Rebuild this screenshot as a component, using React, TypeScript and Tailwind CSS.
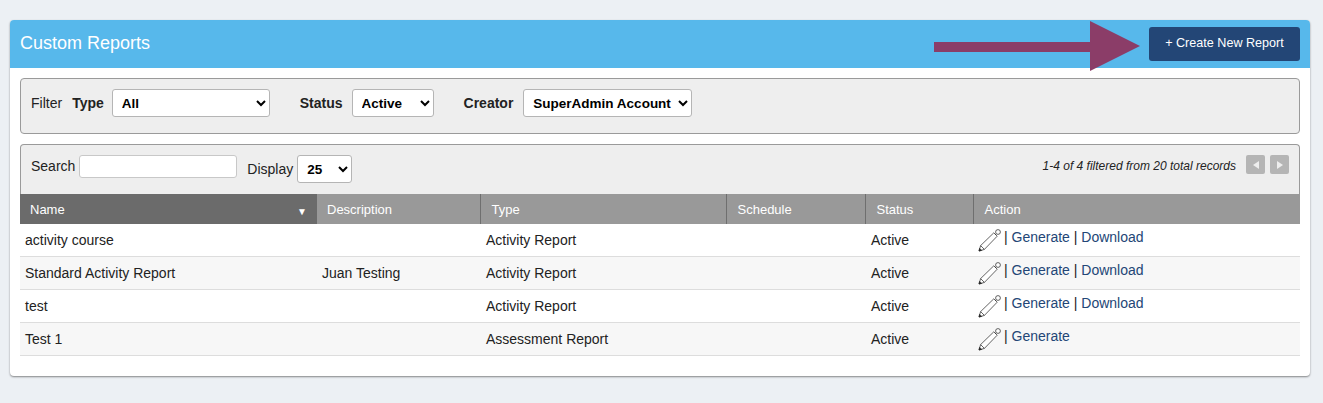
const font = { fontFamily: '"Liberation Sans", Arial, sans-serif' };

function Pencil() {
  return (
    <svg width="24" height="24" viewBox="0 0 24 24" fill="none" stroke="#222" strokeWidth="0.7" className="block">
      <path d="M1 23 L2.6 17.6 L15.8 4.8 L19.2 8.2 L6.4 21.4 Z" strokeLinejoin="round" fill="#fff" />
      <path d="M2.6 17.6 L6.4 21.4" />
      <path d="M1 23 L3.6 22.4 L1.6 20.4 Z" fill="#222" />
      <path d="M16.8 5.8 L17.8 6.8" />
      <circle cx="20" cy="4" r="2.4" fill="#fff" />
    </svg>
  );
}

const rows = [
  { name: "activity course", desc: "", type: "Activity Report", dl: true },
  { name: "Standard Activity Report", desc: "Juan Testing", type: "Activity Report", dl: true },
  { name: "test", desc: "", type: "Activity Report", dl: true },
  { name: "Test 1", desc: "", type: "Assessment Report", dl: false },
];

const selectCls =
  "h-7 rounded-[3px] border border-[#b5b5b5] bg-white pl-[5px] text-[13.5px] font-bold text-black";

const headers = [
  { label: "Description", cls: "pl-[10px] border-r border-[#6f6f6f]" },
  { label: "Type", cls: "pl-[11px] border-r border-[#6f6f6f]" },
  { label: "Schedule", cls: "pl-[11px] border-r border-[#6f6f6f]" },
  { label: "Status", cls: "pl-[11px] border-r border-[#6f6f6f]" },
  { label: "Action", cls: "pl-[11px]" },
];

export default function App() {
  return (
    <div style={font} className="min-h-[403px] bg-[#ecf0f4] px-[10px] pt-[20px] text-[14px] text-[#222]">
      <div className="h-[356px] w-[1300px] overflow-hidden rounded-[4px] bg-white shadow-[0_1px_2px_rgba(0,0,0,0.45)]">
        <div className="relative flex h-[48px] items-center justify-between bg-[#57b8eb] px-[10px]">
          <h1 className="-mt-[1px] text-[18px] font-normal text-white">Custom Reports</h1>
          <svg width="206" height="50" viewBox="0 0 206 50" className="absolute left-[924px] top-[1px] z-10 block">
            <path d="M0 21 H156 V0 L206 25 L156 50 V31 H0 Z" fill="#8b3d68" />
          </svg>
          <button className="h-[34px] w-[151px] rounded-[3px] bg-[#234676] pb-[1px] text-[12.6px] text-white">+ Create New Report</button>
        </div>
        <div className="px-[10px] pt-[10px]">
          <div className="flex h-[56px] items-start gap-[10px] rounded-[4px] border border-[#9a9a9a] bg-[#eeeeee] pl-[10px] pt-[10px]">
            <span className="leading-[28px]">Filter</span>
            <div className="flex items-center gap-[8px]">
              <b className="leading-[28px]">Type</b>
              <select className={`${selectCls} w-[158px]`}><option>All</option></select>
            </div>
            <div className="ml-[20px] flex items-center gap-[9px]">
              <b className="leading-[28px]">Status</b>
              <select className={`${selectCls} w-[82px]`}><option>Active</option></select>
            </div>
            <div className="ml-[20px] flex items-center gap-[10px]">
              <b className="leading-[28px]">Creator</b>
              <select className={`${selectCls} w-[169px]`}><option>SuperAdmin Account</option></select>
            </div>
          </div>
        </div>
        <div className="px-[10px] pt-[10px]">
          <div className="overflow-hidden rounded-t-[4px] border-x border-t border-[#9a9a9a] bg-[#eeeeee]">
            <div className="flex h-[49px] items-start justify-between px-[10px] pt-[10px]">
              <div className="flex items-start">
                <span className="leading-[22px]">Search</span>
                <input className="ml-[4px] h-[23px] w-[158px] rounded-[3px] border border-[#c8c8c8] bg-white" />
                <span className="ml-[10px] mt-[3px] leading-[22px]">Display</span>
                <select className={`${selectCls} ml-[4px] w-[55px]`}><option>25</option></select>
              </div>
              <div className="flex items-start">
                <i className="mr-[10px] text-[12px] leading-[22px]">1-4 of 4 filtered from 20 total records</i>
                <span className="flex h-[19px] w-[19px] items-center justify-center rounded-[2px] bg-[#b5b5b5]">
                  <svg width="6" height="8" viewBox="0 0 6 8"><path d="M6 0 V8 L0 4 Z" fill="#eeeeee" /></svg>
                </span>
                <span className="ml-[5px] flex h-[19px] w-[19px] items-center justify-center rounded-[2px] bg-[#b5b5b5]">
                  <svg width="6" height="8" viewBox="0 0 6 8"><path d="M0 0 V8 L6 4 Z" fill="#eeeeee" /></svg>
                </span>
              </div>
            </div>
          </div>
          <table className="w-[1280px] table-fixed border-collapse text-left">
            <colgroup>
              <col className="w-[297px]" />
              <col className="w-[163px]" />
              <col className="w-[246px]" />
              <col className="w-[139px]" />
              <col className="w-[108px]" />
              <col />
            </colgroup>
            <thead>
              <tr className="h-[30px] bg-[#999999] text-[13px] text-white">
                <th className="relative bg-[#6b6b6b] pl-[10px] pt-[2px] font-normal">
                  Name
                  <span className="absolute right-[10px] top-[10px] text-[10px]">▼</span>
                </th>
                {headers.map((h) => (
                  <th key={h.label} className={`pt-[2px] font-normal ${h.cls}`}>{h.label}</th>
                ))}
              </tr>
            </thead>
            <tbody>
              {rows.map((r, i) => (
                <tr key={r.name} className={`${i === 0 ? "h-[32px]" : "h-[33px]"} border-b border-[#dddddd] ${i % 2 ? "bg-[#f7f7f7]" : "bg-white"}`}>
                  <td className="pl-[5px] pt-[2px]">{r.name}</td>
                  <td className="pl-[5px] pt-[2px]">{r.desc}</td>
                  <td className="pl-[6px] pt-[2px]">{r.type}</td>
                  <td />
                  <td className="pl-[6px] pt-[2px]">Active</td>
                  <td className="pl-[5px]">
                    <div className="flex items-start">
                      <Pencil />
                      <span className="ml-[2px] -mt-[1px]">
                        {"| "}
                        <a className="text-[#234676]">Generate</a>
                        {r.dl && (
                          <>
                            {" | "}
                            <a className="text-[#234676]">Download</a>
                          </>
                        )}
                      </span>
                    </div>
                  </td>
                </tr>
              ))}
            </tbody>
          </table>
        </div>
      </div>
    </div>
  );
}
